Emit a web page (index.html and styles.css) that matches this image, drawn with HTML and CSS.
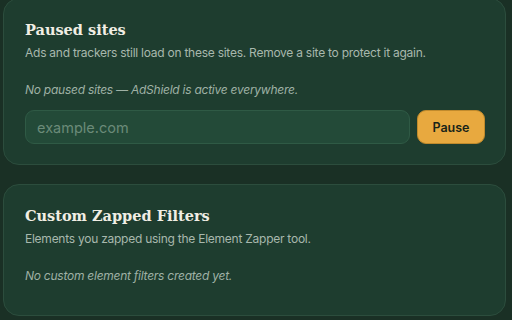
FILE: index.html
```html
<!DOCTYPE html>
<html lang="en">
<head>
<meta charset="utf-8">
<link rel="stylesheet" href="styles.css">
</head>
<body>
<main class="page">
  <section class="card card-paused">
    <h2 class="card-title">Paused sites</h2>
    <p class="card-desc">Ads and trackers still load on these sites. Remove a site to protect it again.</p>
    <p class="empty">No paused sites — AdShield is active everywhere.</p>
    <form class="add-row">
      <input class="site-input" type="text" placeholder="example.com">
      <button class="btn-pause" type="button">Pause</button>
    </form>
  </section>
  <section class="card card-filters">
    <h2 class="card-title">Custom Zapped Filters</h2>
    <p class="card-desc">Elements you zapped using the Element Zapper tool.</p>
    <p class="empty">No custom element filters created yet.</p>
  </section>
</main>
</body>
</html>
```
FILE: styles.css
```css
html, body {
  margin: 0;
  padding: 0;
  height: 100%;
  overflow: hidden;
}
body {
  background: #1a3025;
  font-family: Inter, "Noto Sans", sans-serif;
  color: #e9efe9;
}
.page {
  width: 503px;
  margin-left: 3px;
  margin-top: -2px;
  display: flex;
  flex-direction: column;
  gap: 19px;
}
.card {
  background: #1e3d2f;
  border: 1px solid #2c4d3d;
  border-radius: 16px;
  padding: 20px 20px 20px 21px;
}
.card-title {
  margin: 0;
  font-family: "DejaVu Serif", "Liberation Serif", serif;
  font-weight: 700;
  font-size: 14.5px;
  line-height: 22px;
  color: #f1eee4;
}
.card-desc {
  margin: 3px 0 0;
  font-size: 12px;
  letter-spacing: -0.25px;
  line-height: 18px;
  color: #a8b8ad;
}
.empty {
  margin: 19px 0 0;
  font-size: 12px;
  letter-spacing: -0.25px;
  line-height: 18px;
  font-style: italic;
  color: #9fb1a5;
}
.card-filters .empty {
  margin-bottom: 10px;
}
.add-row {
  display: flex;
  gap: 7px;
  margin-top: 11px;
}
.site-input {
  flex: 1;
  height: 34px;
  box-sizing: border-box;
  margin: 0;
  padding: 0 11px;
  background: #234a38;
  border: 1px solid #2f5a45;
  border-radius: 9px;
  font-family: Inter, sans-serif;
  font-size: 14.5px;
  color: #dfe8e0;
  outline: none;
}
.site-input::placeholder {
  color: #6b8b79;
}
.btn-pause {
  width: 68px;
  height: 34px;
  margin: 0;
  padding: 0;
  background: #e8a93f;
  border: 1px solid #c08a2c;
  border-radius: 9px;
  font-family: Inter, sans-serif;
  font-size: 12.5px;
  font-weight: 600;
  color: #182419;
}
```
